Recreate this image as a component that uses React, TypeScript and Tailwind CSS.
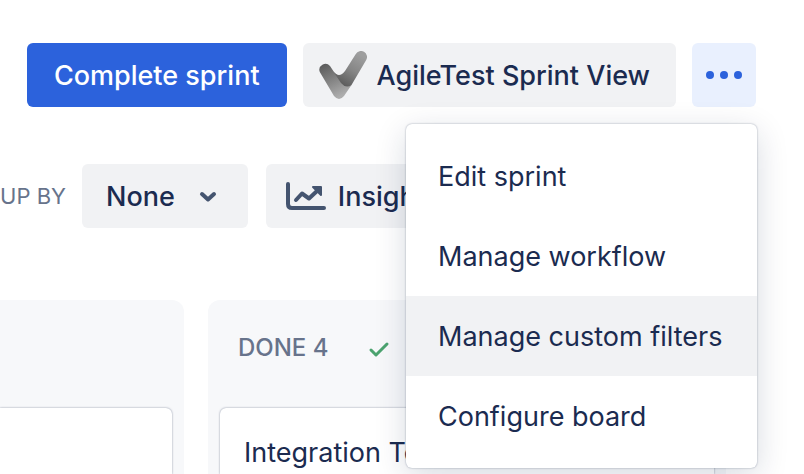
import React from 'react';

interface MenuItem {
  label: string;
  active?: boolean;
}

const menuItems: MenuItem[] = [
  { label: 'Edit sprint' },
  { label: 'Manage workflow' },
  { label: 'Manage custom filters', active: true },
  { label: 'Configure board' },
];

const AgileTestLogo: React.FC = () => (
  <svg className="h-12 w-12 shrink-0" viewBox="0 0 48 48" aria-hidden="true">
    <defs>
      <linearGradient id="rightArm" x1="24" y1="34" x2="42" y2="4" gradientUnits="userSpaceOnUse">
        <stop offset="0" stopColor="#5c5c5c" />
        <stop offset="0.5" stopColor="#868686" />
        <stop offset="1" stopColor="#9e9e9e" />
      </linearGradient>
      <linearGradient id="leftArm" x1="4" y1="14" x2="20" y2="46" gradientUnits="userSpaceOnUse">
        <stop offset="0" stopColor="#5c5c5c" />
        <stop offset="0.6" stopColor="#8c8c8c" />
        <stop offset="1" stopColor="#adadad" />
      </linearGradient>
    </defs>
    <path d="M0.800 21A6 6 0 0 1 11 15L15 21Q19 26 24 24L32.500 34L25 45Q20 51 15 45Z" fill="url(#leftArm)" />
    <path d="M36.800 3A6 6 0 0 1 47.200 9L32.500 34Q27 38 22 32L14 20Q20 28 26 20Z" fill="url(#rightArm)" />
  </svg>
);

const ChevronIcon: React.FC = () => (
  <svg className="h-6 w-6" viewBox="0 0 24 24" fill="none" aria-hidden="true">
    <path d="M6 10L12 15.500L18 10" stroke="#44546f" strokeWidth="4" strokeLinecap="round" strokeLinejoin="round" />
  </svg>
);

const InsightsIcon: React.FC = () => (
  <svg className="h-8 w-10" viewBox="0 0 40 32" fill="none" stroke="#44546f" strokeWidth="4" strokeLinecap="round" strokeLinejoin="round" aria-hidden="true">
    <path d="M2 4V24Q2 28 6 28H38" />
    <path d="M10 20L16 13.500L23 18.500L31 11" />
    <path d="M27 7H35V15Z" fill="#44546f" strokeWidth="2" />
  </svg>
);

const CheckIcon: React.FC = () => (
  <svg className="h-6 w-6" viewBox="0 0 24 24" fill="none" aria-hidden="true">
    <path d="M4 14L9 19L20 8" stroke="#4ba36f" strokeWidth="3" strokeLinecap="round" strokeLinejoin="round" />
  </svg>
);

const MoreMenu: React.FC = () => (
  <div className="relative">
    <button
      type="button"
      aria-label="More actions"
      aria-expanded="true"
      className="flex h-16 w-16 items-center justify-center rounded-md bg-[#e9f0fe]"
    >
      <svg className="h-2 w-9" viewBox="0 0 36 8" fill="#2c62dc" aria-hidden="true">
        <circle cx="4" cy="4" r="4" />
        <circle cx="18" cy="4" r="4" />
        <circle cx="32" cy="4" r="4" />
      </svg>
    </button>
    <div
      role="menu"
      className="absolute top-[81px] -right-px z-10 flex min-w-[351px] flex-col rounded-md bg-white py-3 shadow-[0_0_2px_rgba(9,30,66,0.4),0_8px_32px_rgba(9,30,66,0.16)]"
    >
      {menuItems.map((item) => (
        <button
          key={item.label}
          type="button"
          role="menuitem"
          className={`h-20 px-8 pt-0.5 text-left whitespace-nowrap ${item.active ? 'bg-[#f1f2f4]' : 'bg-white'}`}
        >
          {item.label}
        </button>
      ))}
    </div>
  </div>
);

const App: React.FC = () => {
  return (
    <div className="flex h-screen flex-col overflow-hidden bg-white pt-[43px] font-['Inter','Liberation_Sans',sans-serif] text-[27px] leading-10 text-[#1b2b50]">
      <header className="flex shrink-0 justify-end gap-4 pr-12">
        <button type="button" className="h-16 rounded-md bg-[#2c62dc] px-[27px] pt-0.5 font-medium whitespace-nowrap text-white">
          Complete sprint
        </button>
        <button type="button" className="flex h-16 items-center gap-2.5 rounded-md bg-[#f1f2f4] pr-[26px] pl-4 font-medium whitespace-nowrap">
          <AgileTestLogo />
          <span className="pt-0.5">AgileTest Sprint View</span>
        </button>
        <MoreMenu />
      </header>

      <div className="mt-[57px] flex shrink-0 items-center">
        <div className="flex w-[66px] shrink-0 justify-end">
          <span id="group-by" className="text-[22px] whitespace-nowrap text-[#67738b]">UP BY</span>
        </div>
        <button
          type="button"
          aria-labelledby="group-by"
          className="ml-4 flex h-16 items-center gap-[21px] rounded-md bg-[#f1f2f4] pr-7 pl-6 font-medium"
        >
          <span className="pt-0.5">None</span>
          <ChevronIcon />
        </button>
        <button type="button" className="ml-[18px] flex h-16 items-center gap-3 rounded-md bg-[#f1f2f4] pr-6 pl-5 font-medium">
          <InsightsIcon />
          <span className="pt-0.5">Insights</span>
        </button>
      </div>

      <main className="mt-18 flex flex-1 gap-6 pr-[78px]">
        <section className="w-46 shrink-0 rounded-tr-xl bg-[#f7f8fa] pt-[108px] pr-3">
          <div className="h-full rounded-tr-md bg-white shadow-[0_0_2px_rgba(9,30,66,0.5)]" />
        </section>
        <section className="flex flex-1 flex-col rounded-t-xl bg-[#f7f8fa] px-3">
          <div className="flex h-[108px] items-center gap-[38px] pb-3 pl-[18px]">
            <h2 className="text-2xl font-medium whitespace-nowrap text-[#67738b]">DONE 4</h2>
            <CheckIcon />
          </div>
          <article className="flex-1 rounded-t-md bg-white px-6 pt-[25px] shadow-[0_0_2px_rgba(9,30,66,0.5)]">
            Integration Test
          </article>
        </section>
      </main>
    </div>
  );
};

export default App;
